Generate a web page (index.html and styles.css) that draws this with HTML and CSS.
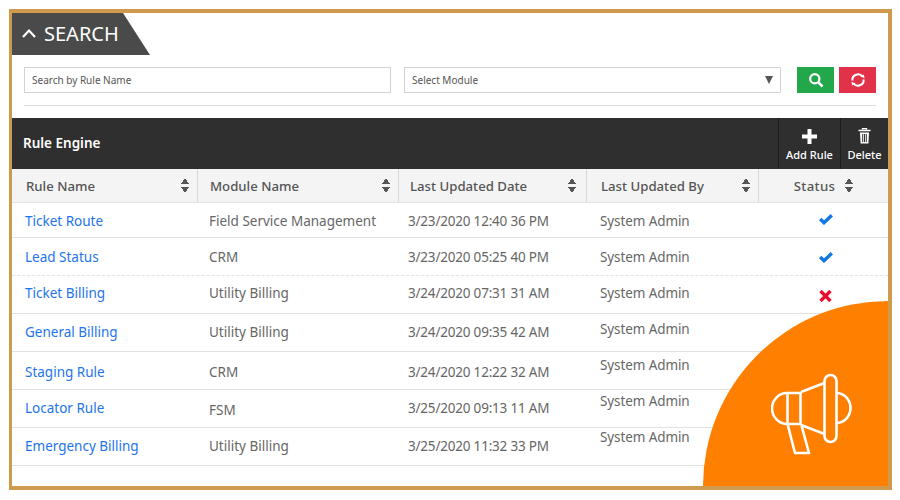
FILE: index.html
```html
<!DOCTYPE html>
<html lang="en">
<head>
  <meta charset="UTF-8" />
  <title>Rule Engine</title>
  <link rel="stylesheet" href="styles.css">
</head>
<body>
<main class="frame">
  <div class="search-tab">
    <svg class="chevron" width="14" height="10" viewBox="0 0 14 10"><path d="M1 9 7 2.500 13 9" fill="none" stroke="#fff" stroke-width="2.200"/></svg>
    <span>SEARCH</span>
  </div>
  <div class="search-bar">
    <div class="field field-name">Search by Rule Name</div>
    <div class="field field-module">Select Module <span class="caret"></span></div>
    <button class="btn btn-search">
      <svg width="16" height="16" viewBox="0 0 16 16"><circle cx="6.800" cy="6.800" r="4.600" fill="none" stroke="#fff" stroke-width="2.200"/><path d="m10.200 10.200 4.300 4.300" stroke="#fff" stroke-width="2.600"/></svg>
    </button>
    <button class="btn btn-reset">
      <svg width="16" height="16" viewBox="0 0 16 16"><path d="M2.400 8.500A5.600 5.600 0 0 1 12.600 4.800M13.600 7.500A5.600 5.600 0 0 1 3.400 11.200" fill="none" stroke="#fff" stroke-width="2"/><path d="M10.600 4.400 14.600 6.200 13.800 2.400zM5.400 11.600 1.400 9.800 2.200 13.600z" fill="#fff"/></svg>
    </button>
  </div>
  <div class="toolbar">
    <div class="toolbar-title">Rule Engine</div>
    <div class="tool tool-add">
      <svg width="15" height="15" viewBox="0 0 15 15"><path d="M5.500 0h4v5.500H15v4H9.500V15h-4V9.500H0v-4h5.500z" fill="#fff"/></svg>
      <span>Add Rule</span>
    </div>
    <div class="tool tool-delete">
      <svg width="13" height="16" viewBox="0 0 13 16"><path d="M4.500 1.500V.5h4v1M.5 2.500h12" fill="none" stroke="#fff" stroke-width="1.400"/><path d="M2 4.500h9l-.6 11H2.600z" fill="#fff"/><path d="M4.700 6v8M6.500 6v8M8.300 6v8" stroke="#2f2f2f" stroke-width="1"/></svg>
      <span>Delete</span>
    </div>
  </div>
  <div class="grid-head row-cols">
    <div class="th">Rule Name<span class="sort"></span></div>
    <div class="th">Module Name<span class="sort"></span></div>
    <div class="th">Last Updated Date<span class="sort"></span></div>
    <div class="th">Last Updated By<span class="sort"></span></div>
    <div class="th th-status">Status<span class="sort"></span></div>
  </div>
  <div class="grid-row row-cols row-1">
    <a class="cell link">Ticket Route</a><div class="cell">Field Service Management</div><div class="cell">3/23/2020 12:40 36 PM</div><div class="cell">System Admin</div>
    <div class="cell status"><svg class="tick" width="14" height="11" viewBox="0 0 14 11"><path d="M1.200 5 5 8.700 12.800 1.300" fill="none" stroke="#0f78e6" stroke-width="3.400"/></svg></div>
  </div>
  <div class="grid-row row-cols row-2">
    <a class="cell link">Lead Status</a><div class="cell">CRM</div><div class="cell">3/23/2020 05:25 40 PM</div><div class="cell">System Admin</div>
    <div class="cell status"><svg class="tick" width="14" height="11" viewBox="0 0 14 11"><path d="M1.200 5 5 8.700 12.800 1.300" fill="none" stroke="#0f78e6" stroke-width="3.400"/></svg></div>
  </div>
  <div class="grid-row row-cols row-3">
    <a class="cell link">Ticket Billing</a><div class="cell">Utility Billing</div><div class="cell">3/24/2020 07:31 31 AM</div><div class="cell">System Admin</div>
    <div class="cell status"><svg class="cross" width="13" height="12" viewBox="0 0 13 12"><path d="m1.500 1 10 10M11.500 1l-10 10" fill="none" stroke="#e8112d" stroke-width="3.400"/></svg></div>
  </div>
  <div class="grid-row row-cols row-4">
    <a class="cell link">General Billing</a><div class="cell">Utility Billing</div><div class="cell">3/24/2020 09:35 42 AM</div><div class="cell admin-4">System Admin</div><div class="cell"></div>
  </div>
  <div class="grid-row row-cols row-5">
    <a class="cell link">Staging Rule</a><div class="cell">CRM</div><div class="cell">3/24/2020 12:22 32 AM</div><div class="cell admin-5">System Admin</div><div class="cell"></div>
  </div>
  <div class="grid-row row-cols row-6">
    <a class="cell link">Locator Rule</a><div class="cell cell-low">FSM</div><div class="cell">3/25/2020 09:13 11 AM</div><div class="cell admin-6">System Admin</div><div class="cell"></div>
  </div>
  <div class="grid-row row-cols row-7">
    <a class="cell link">Emergency Billing</a><div class="cell">Utility Billing</div><div class="cell">3/25/2020 11:32 33 PM</div><div class="cell admin-7">System Admin</div><div class="cell"></div>
  </div>
  <div class="promo">
    <svg width="82" height="84" viewBox="0 0 82 84">
      <g fill="none" stroke="#fff" stroke-width="2.600" stroke-linejoin="round">
        <path d="M16.500 20H16a15 15.500 0 0 0 0 31H29.500V20z"/>
        <path d="M16.500 20V51"/>
        <path d="M30 19 53.500 10M30 52 53.500 61"/>
        <rect x="53.500" y="2" width="12" height="67" rx="6"/>
        <path d="M65.500 20a14 15 0 0 1 0 30"/>
        <path d="M16.500 51 24 80H38L30.500 52.500"/>
      </g>
    </svg>
  </div>
</main>
</body>
</html>
```
FILE: styles.css
```css
* {
  margin: 0;
  padding: 0;
  box-sizing: border-box;
}
body {
  background: #fff;
  font-family: "Noto Sans", "Open Sans", sans-serif;
  padding: 9px 8px 10px 9px;
}
.frame {
  position: relative;
  width: 883px;
  height: 481px;
  border: 4px solid #cf9a4e;
  border-left-width: 3px;
  background: #fff;
  overflow: hidden;
}

/* search */
.search-tab {
  display: flex;
  align-items: center;
  gap: 8px;
  width: 138px;
  height: 42px;
  padding: 0 0 2px 10px;
  background: #4a4a4a;
  color: #fff;
  font-size: 20px;
  clip-path: polygon(0 0, 111px 0, 100% 100%, 0 100%);
}
.search-bar {
  display: flex;
  align-items: center;
  margin: 12px 12px 0;
  padding-bottom: 12px;
  border-bottom: 1px solid #ddd;
}
.field {
  height: 26px;
  border: 1px solid #d2d2d2;
  font-size: 10px;
  line-height: 24px;
  padding-left: 7px;
  color: #555;
}
.field-name {
  width: 367px;
  margin-right: 13px;
}
.field-module {
  display: flex;
  justify-content: space-between;
  align-items: center;
  width: 377px;
  margin-right: 16px;
}
.caret {
  width: 0;
  height: 0;
  margin-right: 7px;
  border-left: 4px solid transparent;
  border-right: 4px solid transparent;
  border-top: 8px solid #555;
}
.btn {
  display: flex;
  align-items: center;
  justify-content: center;
  width: 37px;
  height: 26px;
  border: 0;
}
.btn-search {
  background: #22a84a;
  margin-right: 5px;
}
.btn-reset {
  background: #e2324a;
}

/* toolbar */
.toolbar {
  display: flex;
  align-items: stretch;
  height: 51px;
  margin-top: 12px;
  background: #2f2f2f;
  color: #fff;
}
.toolbar-title {
  flex: 1;
  padding-left: 11px;
  font-size: 13.500px;
  font-weight: 600;
  line-height: 50px;
}
.tool {
  display: flex;
  flex-direction: column;
  align-items: center;
  justify-content: flex-end;
  gap: 3px;
  padding-bottom: 7px;
  border-left: 1px solid #1d1d1d;
  font-size: 11px;
  font-weight: 500;
}
.tool-add {
  width: 62px;
}
.tool-delete {
  width: 48px;
}

/* table */
.row-cols {
  display: grid;
  grid-template-columns: 186px 201px 188px 172px 129px;
}
.grid-head {
  height: 34px;
  background: #f4f4f4;
  border-bottom: 1px solid #e2e2e2;
}
.th {
  display: flex;
  align-items: center;
  justify-content: space-between;
  padding: 0 8px 0 14px;
  border-right: 1px solid #d8d8d8;
  color: #555;
  font-size: 13.200px;
  font-weight: 500;
}
.th:nth-child(2) {
  padding-left: 12px;
}
.th:nth-child(3) {
  padding: 0 10px 0 11px;
}
.th-status {
  justify-content: center;
  gap: 10px;
  padding: 0;
  border-right: 0;
  letter-spacing: 0.3px;
}
.sort {
  width: 8px;
  height: 15px;
  background:
    linear-gradient(to bottom right, transparent 50%, #555 50%) 0 0 / 4px 6px no-repeat,
    linear-gradient(to bottom left, transparent 50%, #555 50%) 4px 0 / 4px 6px no-repeat,
    linear-gradient(to top right, transparent 50%, #555 50%) 0 9px / 4px 6px no-repeat,
    linear-gradient(to top left, transparent 50%, #555 50%) 4px 9px / 4px 6px no-repeat;
}
.grid-row {
  height: 38px;
  border-bottom: 1px solid #e2e2e2;
  align-items: start;
}
.cell {
  padding: var(--pad) 0 0 13px;
  color: #666;
  font-size: 13.500px;
  line-height: 20px;
}
.cell:nth-child(2) {
  padding-left: 11px;
}
.cell:nth-child(3) {
  padding-left: 9px;
  letter-spacing: -0.2px;
}
.cell:nth-child(4) {
  letter-spacing: -0.1px;
}
.link {
  color: #1e74ee;
}
.row-1 {
  height: 35px;
  --pad: 8px;
  --icon: 11px;
}
.row-2 {
  --pad: 9px;
  --icon: 14px;
  border-bottom-style: dashed;
}
.row-3 {
  --pad: 7px;
  --icon: 14px;
}
.row-4,
.row-6,
.row-7 {
  --pad: 8px;
}
.row-5 {
  --pad: 10px;
}
.admin-4 {
  padding-top: 5px;
}
.admin-5 {
  padding-top: 3px;
}
.admin-6 {
  padding-top: 1px;
}
.admin-7 {
  padding-top: 0;
  margin-top: -1px;
}
.cell-low {
  padding-top: 10px;
}
.status {
  padding: 0 0 0 4px;
}
.tick,
.cross {
  display: block;
  margin: var(--icon) auto 0;
}

/* orange corner over the table */
.promo {
  position: absolute;
  right: 0;
  bottom: 0;
  width: 185px;
  height: 185px;
  padding: 72px 0 0 68px;
  background: #ff8000;
  border-top-left-radius: 185px;
}
.promo svg {
  display: block;
}
```
